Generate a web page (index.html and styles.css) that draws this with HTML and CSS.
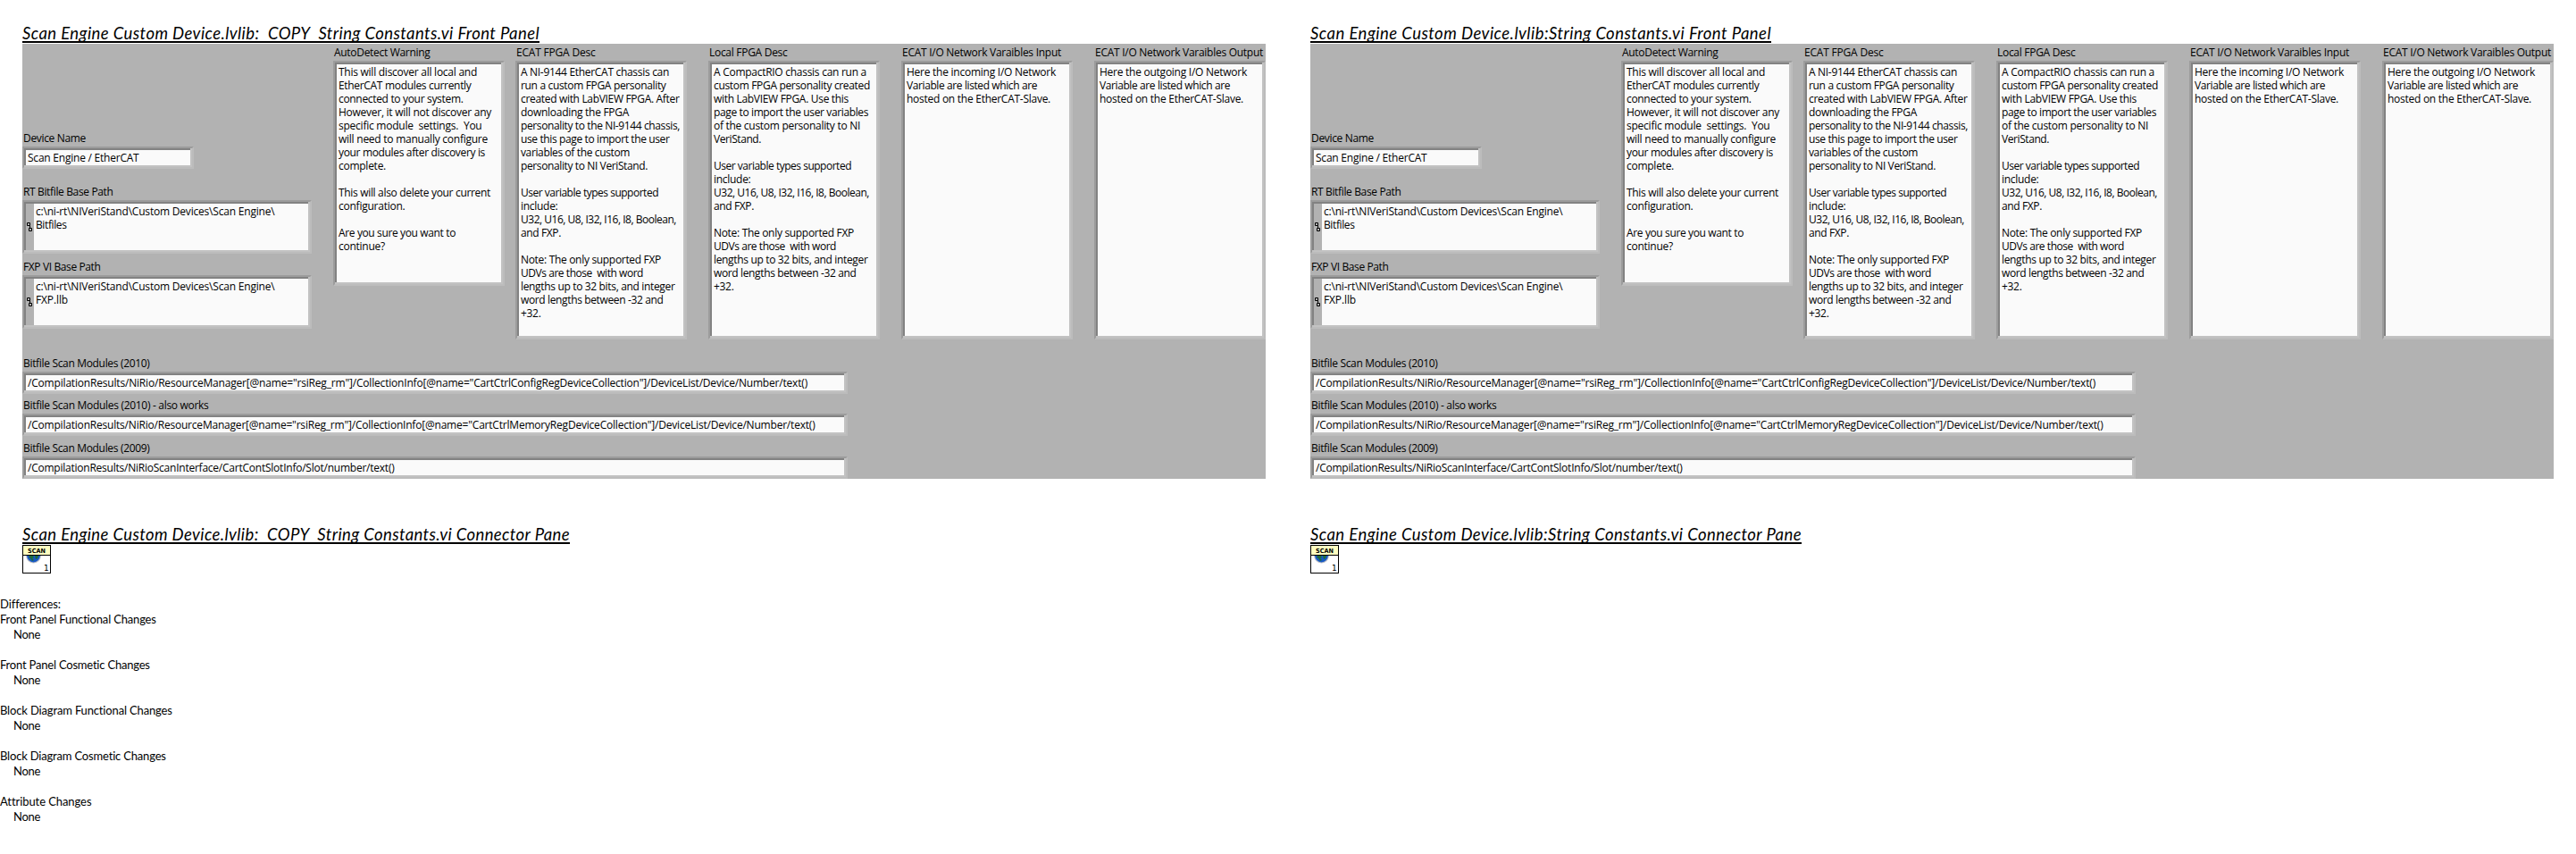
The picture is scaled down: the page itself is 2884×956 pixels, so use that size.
FILE: index.html
```html
<!DOCTYPE html>
<html lang="en">
<head>
<meta charset="utf-8">
<title>VI Comparison Report</title>
<link rel="stylesheet" href="styles.css">
</head>
<body>
<main class="report">
  <div class="columns" id="columns"></div>
  <section class="differences">
    <p data-w="67.5">Differences:</p>
    <p data-w="175">Front Panel Functional Changes</p><p class="result" data-w="30">None</p>
    <p data-w="168">Front Panel Cosmetic Changes</p><p class="result" data-w="30">None</p>
    <p data-w="193">Block Diagram Functional Changes</p><p class="result" data-w="30">None</p>
    <p data-w="186">Block Diagram Cosmetic Changes</p><p class="result" data-w="30">None</p>
    <p data-w="102">Attribute Changes</p><p class="result" data-w="30">None</p>
  </section>
</main>
<template id="vi">
  <section class="vi">
    <h2 class="title front"></h2>
    <div class="panel">
      <div class="upper">
        <div class="paths">
          <div class="field device"><label data-w="70">Device Name</label><div class="box line" data-w="124.5">Scan Engine / EtherCAT</div></div>
          <div class="field rt"><label data-w="100.5">RT Bitfile Base Path</label><div class="box path"><svg class="path-icon" viewBox="0 0 9 52"><path d="M1.5 21.5h3v3h-3zM4.5 24.5v3M3.500 27.500h3v3h-3z"/></svg><div class="value" data-w="267.5 34.5">c:\ni-rt\NIVeriStand\Custom Devices\Scan Engine\
Bitfiles</div></div></div>
          <div class="field fxp"><label data-w="86.5">FXP VI Base Path</label><div class="box path"><svg class="path-icon" viewBox="0 0 9 52"><path d="M1.5 21.5h3v3h-3zM4.5 24.5v3M3.500 27.500h3v3h-3z"/></svg><div class="value" data-w="267.5 36">c:\ni-rt\NIVeriStand\Custom Devices\Scan Engine\
FXP.llb</div></div></div>
        </div>
        <div class="field text warning"><label data-w="107.5">AutoDetect Warning</label><div class="box" data-w="155 148.5 139.5 171 160.5 167 164 53 0 170 74.5 0 131 52">This will discover all local and
EtherCAT modules currently
connected to your system.
However, it will not discover any
specific module  settings.  You
will need to manually configure
your modules after discovery is
complete.

This will also delete your current
configuration.

Are you sure you want to
continue?</div></div>
        <div class="descriptions">
        <div class="field text"><label data-w="88.5">ECAT FPGA Desc</label><div class="box" data-w="166 162.5 177.5 121 178 166.5 122 142 0 154 41.5 174 45 0 157 137 172.5 159.5 22.5">A NI-9144 EtherCAT chassis can
run a custom FPGA personality
created with LabVIEW FPGA. After
downloading the FPGA
personality to the NI-9144 chassis,
use this page to import the user
variables of the custom
personality to NI VeriStand.

User variable types supported
include:
U32, U16, U8, I32, I16, I8, Boolean,
and FXP.

Note: The only supported FXP
UDVs are those  with word
lengths up to 32 bits, and integer
word lengths between -32 and
+32.</div></div>
        <div class="field text"><label data-w="87.5">Local FPGA Desc</label><div class="box" data-w="171 175 151 173 164 53 0 154 41.5 174 45 0 157 137 172.5 159.5 22.5">A CompactRIO chassis can run a
custom FPGA personality created
with LabVIEW FPGA. Use this
page to import the user variables
of the custom personality to NI
VeriStand.

User variable types supported
include:
U32, U16, U8, I32, I16, I8, Boolean,
and FXP.

Note: The only supported FXP
UDVs are those  with word
lengths up to 32 bits, and integer
word lengths between -32 and
+32.</div></div>
        <div class="field text"><label data-w="178">ECAT I/O Network Varaibles Input</label><div class="box" data-w="167 146 161">Here the incoming I/O Network
Variable are listed which are
hosted on the EtherCAT-Slave.</div></div>
        <div class="field text"><label data-w="188">ECAT I/O Network Varaibles Output</label><div class="box" data-w="165 146 161">Here the outgoing I/O Network
Variable are listed which are
hosted on the EtherCAT-Slave.</div></div>
        </div>
      </div>
      <div class="queries">
        <div class="field"><label data-w="141.5">Bitfile Scan Modules (2010)</label><div class="box line" data-w="873">/CompilationResults/NiRio/ResourceManager[@name="rsiReg_rm"]/CollectionInfo[@name="CartCtrlConfigRegDeviceCollection"]/DeviceList/Device/Number/text()</div></div>
        <div class="field"><label data-w="207.5">Bitfile Scan Modules (2010) - also works</label><div class="box line" data-w="881.5">/CompilationResults/NiRio/ResourceManager[@name="rsiReg_rm"]/CollectionInfo[@name="CartCtrlMemoryRegDeviceCollection"]/DeviceList/Device/Number/text()</div></div>
        <div class="field last"><label data-w="141.5">Bitfile Scan Modules (2009)</label><div class="box line" data-w="410.5">/CompilationResults/NiRioScanInterface/CartContSlotInfo/Slot/number/text()</div></div>
      </div>
    </div>
    <h2 class="title connector"></h2>
    <svg class="vi-icon" viewBox="0 0 32 32">
      <rect x=".5" y=".5" width="31" height="31" fill="#fff" stroke="#000"/>
      <path d="M4 12h17q-1 8-8.500 8.500Q5 20 4 12z" fill="#b9bcc4"/>
      <path d="M5 12h15q-1 7-7.500 7.500Q6 19 5 12z" fill="#1659c4"/>
      <path d="M8 12h4l1 2-2 1 2 2-2 1-2-3-2-1zM14 12h4l-1 3-2 1z" fill="#1f6b3a"/>
      <rect x=".5" y=".5" width="31" height="11" fill="#ffffc0" stroke="#000"/>
      <text class="icon-label" x="6" y="8.500" textLength="20" lengthAdjust="spacingAndGlyphs">SCAN</text>
      <text class="icon-number" x="24" y="29">1</text>
    </svg>
  </section>
</template>
<script src="report.js"></script>
</body>
</html>
```
FILE: styles.css
```css
* { box-sizing: border-box; margin: 0; padding: 0; }
body { background: #fff; color: #000; }
.report { width: 2884px; height: 956px; overflow: hidden; }
.columns { display: grid; grid-template-columns: 1442px 1442px; }
.vi { padding: 24px 25px 0; }
.title {
  width: max-content; height: 24px; overflow: hidden; white-space: pre;
  border-bottom: 2px solid #000;
  font: italic 400 18.5px/27px Lato, sans-serif;
}
.panel {
  width: 1392px; height: 487px; margin-top: 1px; background: #b2b2b2;
  font: 12px/15px "Open Sans", sans-serif;
}
.upper { display: flex; height: 350px; }
.paths { width: 348px; padding-top: 98px; }
.field label { display: block; height: 17px; padding-left: 1px; white-space: pre; }
.text-line { display: block; width: max-content; height: 15px; }
.title .text-line { height: auto; }
.differences .text-line { height: 17px; }
.box {
  border: 2px solid; border-color: #9c9c9c #bcbcbc #bcbcbc #9c9c9c;
  box-shadow: inset -2px -2px 0 #c2c2c2, inset 2px 2px 0 #828282;
  background: #fafafa; padding: 3px 4px; white-space: pre;
}
.line { height: 25px; }
.device { width: 192px; margin-bottom: 18px; }
.path { display: flex; width: 324px; height: 60px; padding: 2px; }
.path-icon { width: 9px; height: 52px; background: #b2b2b2; fill: none; stroke: #000; }
.value { padding: 1px 2px; }
.rt { margin-bottom: 7px; }
.text { width: 192px; padding-top: 2px; }
.text .box { height: 312px; }
.warning .box { height: 252px; }
.descriptions { display: flex; gap: 24px; margin-left: 12px; }
.queries { display: grid; row-gap: 5px; width: 924px; }
.last { padding-top: 1px; }
.connector { margin-top: 49px; }
.vi-icon { display: block; width: 32px; height: 32px; margin-top: 1px; }
.icon-label { font: 700 7px "DejaVu Sans", sans-serif; }
.icon-number { font: 9px "DejaVu Sans", sans-serif; }
.differences { padding-top: 26px; font: 13px/17px Lato, sans-serif; }
.result { padding: 0 0 17px 15px; }
```
FILE: report.js
```js
const template = document.getElementById('vi');
const reports = [
  { name: '  COPY  String Constants.vi', front: 579, connector: 613 },
  { name: 'String Constants.vi', front: 516, connector: 550 },
];
for (const { name, front, connector } of reports) {
  const vi = template.content.cloneNode(true);
  const frontTitle = vi.querySelector('.front');
  const connectorTitle = vi.querySelector('.connector');
  frontTitle.textContent = `Scan Engine Custom Device.lvlib:${name} Front Panel`;
  frontTitle.dataset.w = front;
  connectorTitle.textContent = `Scan Engine Custom Device.lvlib:${name} Connector Pane`;
  connectorTitle.dataset.w = connector;
  document.getElementById('columns').append(vi);
}

// Tracks every line of text to its own measure.
for (const el of document.querySelectorAll('[data-w]')) {
  const widths = el.dataset.w.split(' ').map(Number);
  const lines = el.textContent.split('\n');
  el.textContent = '';
  lines.forEach((text, i) => {
    const line = document.createElement('span');
    line.className = 'text-line';
    line.textContent = text;
    el.append(line);
    if (text) {
      const natural = line.getBoundingClientRect().width;
      line.style.letterSpacing = `${(widths[i] - natural) / text.length}px`;
    }
  });
}
```
